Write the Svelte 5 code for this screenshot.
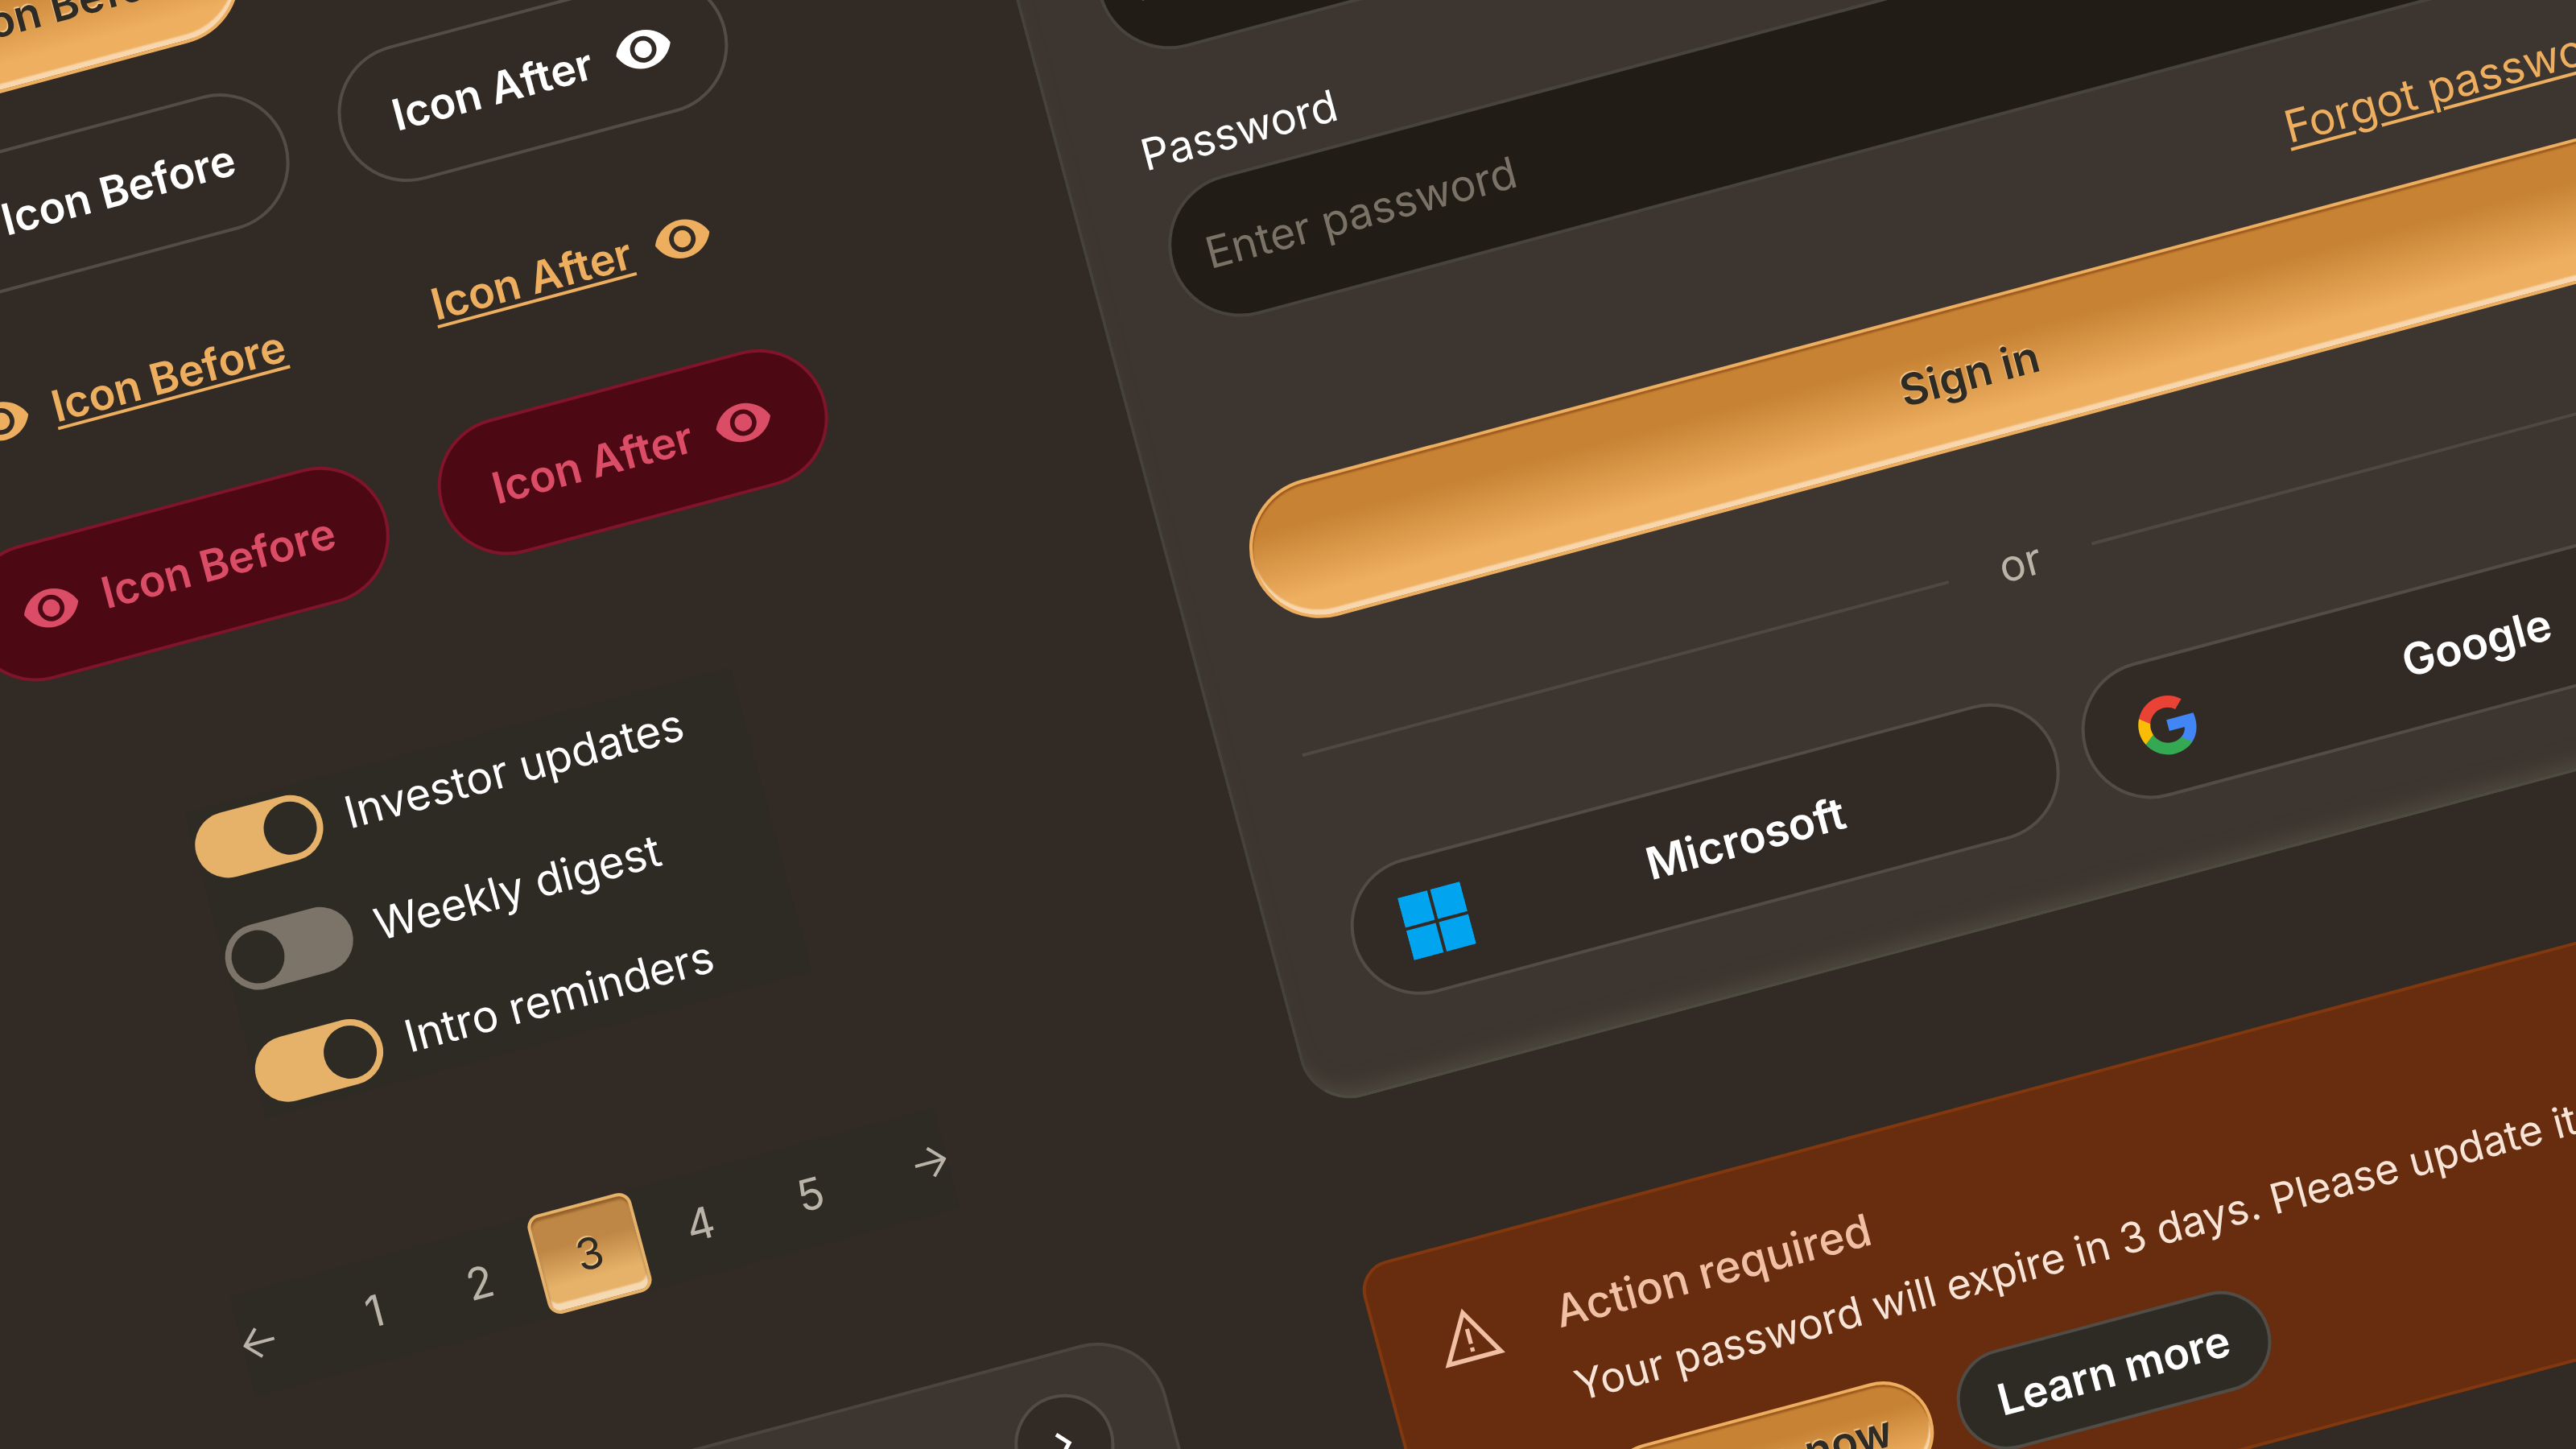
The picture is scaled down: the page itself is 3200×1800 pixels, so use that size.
<script lang="ts">
  interface Toggle {
    id: string;
    label: string;
    on: boolean;
  }

  let toggles: Toggle[] = $state([
    { id: "investor", label: "Investor updates", on: true },
    { id: "digest", label: "Weekly digest", on: false },
    { id: "intro", label: "Intro reminders", on: true },
  ]);

  const pages = [1, 2, 3, 4, 5];
  let current = $state(3);

  let email = $state("");
  let password = $state("");

  const variants = ["primary", "outline", "link", "danger"];
</script>

{#snippet eye()}
  <svg class="eye" viewBox="0 0 24 24" aria-hidden="true">
    <path
      fill="currentColor"
      fill-rule="evenodd"
      d="M12 4.500C7 4.500 2.730 7.610 1 12c1.730 4.390 6 7.500 11 7.500s9.270-3.110 11-7.500c-1.730-4.390-6-7.500-11-7.500zM12 6.800a5.200 5.200 0 1 1 0 10.400 5.200 5.200 0 0 1 0-10.400zM12 8.600a3.400 3.400 0 1 0 0 6.800 3.400 3.400 0 0 0 0-6.800z"
    />
  </svg>
{/snippet}

<main class="stage">
  <!-- The whole board is laid out straight and tilted once, as one sheet. -->
  <div class="board">
    <section class="column controls">
      <div class="buttons">
        {#each variants as variant}
          <button class="btn {variant}">{@render eye()}<span>Icon Before</span></button>
          <button class="btn {variant}"><span>Icon After</span>{@render eye()}</button>
        {/each}
      </div>

      <div class="toggles">
        {#each toggles as toggle (toggle.id)}
          <div class="toggle">
            <input type="checkbox" role="switch" id={toggle.id} bind:checked={toggle.on} />
            <label for={toggle.id}>{toggle.label}</label>
          </div>
        {/each}
      </div>

      <nav class="pagination" aria-label="Pagination">
        <button class="step prev" aria-label="Previous page" onclick={() => (current = Math.max(1, current - 1))}>
          <svg viewBox="0 0 40 40" fill="none" stroke="currentColor" stroke-width="4" aria-hidden="true">
            <path d="M40 20H3M20 2 2.500 20 20 38" />
          </svg>
        </button>
        {#each pages as page}
          <button
            class="page"
            class:current={page === current}
            aria-current={page === current ? "page" : undefined}
            onclick={() => (current = page)}>{page}</button
          >
        {/each}
        <button class="step next" aria-label="Next page" onclick={() => (current = Math.min(5, current + 1))}>
          <svg viewBox="0 0 40 40" fill="none" stroke="currentColor" stroke-width="4" aria-hidden="true">
            <path d="M0 20h37M20 2l17.500 18L20 38" />
          </svg>
        </button>
      </nav>

      <div class="carousel">
        <button class="round" aria-label="Next slide">
          <svg viewBox="0 0 20 32" fill="none" stroke="currentColor" stroke-width="5" aria-hidden="true">
            <path d="M3 2l13 14L3 30" />
          </svg>
        </button>
      </div>
    </section>

    <section class="column forms">
      <form class="card" onsubmit={(e) => e.preventDefault()}>
        <div class="field">
          <label for="email">Email</label>
          <input type="email" id="email" placeholder="Email" bind:value={email} />
        </div>
        <div class="field">
          <label for="password">Password</label>
          <input type="password" id="password" placeholder="Enter password" bind:value={password} />
        </div>
        <a class="forgot" href="#forgot">Forgot password?</a>
        <button class="btn primary submit" type="submit">Sign in</button>
        <div class="divider"><span>or</span></div>
        <div class="providers">
          <button class="btn provider" type="button">
            <svg class="logo" viewBox="0 0 80 80" fill="#00a4ef" aria-hidden="true">
              <path d="M0 0h38v38H0zM42 0h38v38H42zM0 42h38v38H0zM42 42h38v38H42z" />
            </svg>
            <span>Microsoft</span>
          </button>
          <button class="btn provider" type="button">
            <svg class="logo" viewBox="0 0 24 24" aria-hidden="true">
              <path
                fill="#4285f4"
                d="M22.560 12.250c0-.78-.07-1.530-.2-2.250H12v4.260h5.920c-.26 1.370-1.040 2.530-2.210 3.310v2.770h3.570c2.080-1.920 3.280-4.740 3.280-8.090z"
              />
              <path
                fill="#34a853"
                d="M12 23c2.970 0 5.460-.98 7.280-2.660l-3.570-2.770c-.98.66-2.230 1.060-3.710 1.060-2.860 0-5.290-1.930-6.160-4.530H2.180v2.840C3.990 20.530 7.700 23 12 23z"
              />
              <path
                fill="#fbbc05"
                d="M5.840 14.090c-.22-.66-.35-1.360-.35-2.090s.13-1.430.35-2.090V7.070H2.180C1.430 8.550 1 10.220 1 12s.43 3.450 1.180 4.930l3.660-2.840z"
              />
              <path
                fill="#ea4335"
                d="M12 5.380c1.620 0 3.060.56 4.210 1.640l3.150-3.150C17.450 2.090 14.970 1 12 1 7.700 1 3.990 3.470 2.180 7.070l3.660 2.840c.87-2.600 3.300-4.530 6.160-4.530z"
              />
            </svg>
            <span>Google</span>
          </button>
        </div>
      </form>

      <div class="alert" role="alert">
        <svg class="warning" viewBox="0 0 24 24" fill="none" stroke="currentColor" aria-hidden="true">
          <path stroke-width="1.6" d="M12 3.600 21.600 20.200H2.400z" />
          <path stroke-width="1.5" d="M12 9.500v5.500M12 16.300v1.500" />
        </svg>
        <div class="message">
          <h2>Action required</h2>
          <p>Your password will expire in 3 days. Please update it now.</p>
          <div class="actions">
            <button class="btn small primary">Update now</button>
            <button class="btn small outline">Learn more</button>
          </div>
        </div>
      </div>
    </section>
  </div>
</main>

<style>
  :global(body) {
    margin: 0;
    background: #322a24;
  }

  .stage {
    --bg: #322a24;
    --panel: #2e2a24;
    --surface: #3d352f;
    --sunk: #211d16;
    --line: #514c45;
    --gold: #eeae5f;
    --muted: #b9b3a8;
    height: 100vh;
    overflow: hidden;
    background: var(--bg);
    color: #ffffff;
    font-family: Inter, "Liberation Sans", sans-serif;
    font-size: 54px;
    line-height: 76px;
  }

  .board {
    display: grid;
    grid-template-columns: 40vw 64vw;
    column-gap: 268px;
    width: max-content;
    transform-origin: 0 0;
    transform: rotate(-15deg) translate(-329px, -60px);
  }

  .column {
    display: flex;
    flex-direction: column;
    gap: 204px;
  }
  .controls {
    align-items: center;
  }
  .forms {
    padding-top: 121px;
  }

  button,
  input {
    box-sizing: border-box;
    margin: 0;
    font: inherit;
    color: inherit;
  }
  button {
    cursor: pointer;
  }

  /* Buttons */
  .buttons {
    display: grid;
    grid-template-columns: max-content max-content;
    gap: 68px;
  }
  .btn {
    display: flex;
    align-items: center;
    justify-content: center;
    gap: 28px;
    height: 172px;
    padding: 0 64px;
    border: 4px solid transparent;
    border-radius: 90px;
    background: none;
    font-weight: 600;
    white-space: nowrap;
  }
  .btn.small {
    height: 126px;
    padding: 0 48px;
  }
  .eye {
    width: 76px;
    height: 76px;
  }
  .primary,
  .page.current {
    border-color: var(--gold);
    background: linear-gradient(#c78234 28%, #eeaf60 82%);
    box-shadow:
      inset 0 3px 2px #9c5a1e,
      inset 0 -7px 2px #f8d7ae;
    color: #2e2a24;
    text-shadow: -1px -2px 1px #f3c88e;
  }
  .outline {
    border-color: var(--line);
    background: var(--bg);
  }
  .link {
    justify-content: flex-start;
    padding: 0 50px;
    color: var(--gold);
  }
  .link:nth-child(odd) {
    justify-content: center;
  }
  .link span {
    text-decoration: underline;
    text-decoration-thickness: 4px;
    text-underline-offset: 6px;
  }
  .danger {
    border-color: #80142a;
    background: #4d0913;
    color: #db4d67;
  }

  /* Switches */
  .toggles {
    display: flex;
    flex-direction: column;
    gap: 42px;
    width: 700px;
    background: var(--panel);
    font-size: 55px;
  }
  .toggle {
    display: flex;
    align-items: center;
    gap: 30px;
    height: 102px;
  }
  .toggle input {
    display: flex;
    width: 162px;
    height: 82px;
    padding: 8px;
    border-radius: 41px;
    background: #7c7468;
    appearance: none;
  }
  .toggle input::before {
    content: "";
    width: 66px;
    height: 66px;
    border-radius: 50%;
    background: var(--panel);
  }
  .toggle input:checked {
    justify-content: flex-end;
    background: #e6b26a;
  }

  /* Pagination */
  .pagination {
    display: flex;
    align-items: center;
    gap: 8px;
    background: var(--panel);
    color: var(--muted);
  }
  .page,
  .step {
    border: 4px solid transparent;
    background: none;
  }
  .page {
    height: 127px;
    padding: 0 46px;
    border-radius: 16px;
  }
  .page.current {
    border-color: #e6b26a;
    background: linear-gradient(#bf8745 35%, #e6b26a 75%);
    box-shadow:
      inset 0 4px 3px #95602a,
      inset 0 -9px 2px #f5d9b2;
  }
  .step {
    padding: 0;
    border: none;
    line-height: 0;
  }
  .step svg {
    width: 40px;
    height: 40px;
  }
  .prev {
    margin-right: 60px;
  }
  .next {
    margin-left: 60px;
  }

  /* Carousel */
  .carousel {
    display: flex;
    justify-content: flex-end;
    align-items: flex-start;
    align-self: stretch;
    box-sizing: border-box;
    min-height: 480px;
    padding: 48px 72px;
    border: 4px solid #4a453d;
    border-radius: 88px;
    background: var(--surface);
  }
  .round {
    display: flex;
    align-items: center;
    justify-content: center;
    width: 124px;
    height: 124px;
    padding: 0;
    border: 4px solid var(--line);
    border-radius: 50%;
    background: var(--bg);
  }
  .round svg {
    width: 20px;
    height: 32px;
  }

  /* Sign-in card */
  .card {
    display: flex;
    flex-direction: column;
    gap: 68px;
    padding: 97px;
    border: 4px solid #45423a;
    border-bottom-color: #4d4b40;
    border-radius: 64px;
    background: var(--surface);
    box-shadow: inset 0 -20px 26px -13px #4e4b40;
  }
  .field {
    display: flex;
    flex-direction: column;
  }
  .field label {
    line-height: 97px;
  }
  .field input {
    width: 100%;
    height: 179px;
    padding: 0 42px;
    border: 4px solid #47443b;
    border-radius: 90px;
    background: var(--sunk);
    outline: none;
  }
  .field input::placeholder {
    color: #7a7167;
    opacity: 1;
  }
  .forgot {
    align-self: flex-end;
    color: var(--gold);
    font-size: 55px;
    text-decoration-thickness: 4px;
    text-underline-offset: 6px;
  }
  .submit {
    height: 175px;
  }
  .divider {
    display: flex;
    align-items: center;
    gap: 66px;
    padding: 50px 0;
    color: var(--muted);
  }
  .divider::before,
  .divider::after {
    content: "";
    flex: 1;
    height: 4px;
    background: #4d4941;
  }
  .providers {
    display: grid;
    grid-template-columns: 1fr 1fr;
    gap: 34px;
  }
  .provider {
    gap: 24px;
    border-color: var(--line);
    background: var(--bg);
    font-size: 55px;
  }
  .provider span {
    flex: 1;
    text-align: center;
  }
  .logo {
    width: 80px;
    height: 80px;
  }

  /* Alert */
  .alert {
    display: flex;
    align-items: flex-start;
    gap: 70px;
    padding: 71px 68px;
    border: 4px solid #81380f;
    border-radius: 38px;
    background: #672d0e;
    color: #f0bfa4;
  }
  .warning {
    width: 84px;
    height: 84px;
  }
  .message {
    display: flex;
    flex-direction: column;
    gap: 12px;
    line-height: 84px;
  }
  h2,
  p {
    margin: 0;
  }
  h2 {
    font-size: 55px;
    font-weight: 500;
  }
  p {
    color: #f8e4d6;
    font-size: 52px;
  }
  .actions {
    display: flex;
    gap: 34px;
    padding-top: 36px;
  }
  .actions .outline {
    color: #ffffff;
    background: var(--panel);
  }
</style>
